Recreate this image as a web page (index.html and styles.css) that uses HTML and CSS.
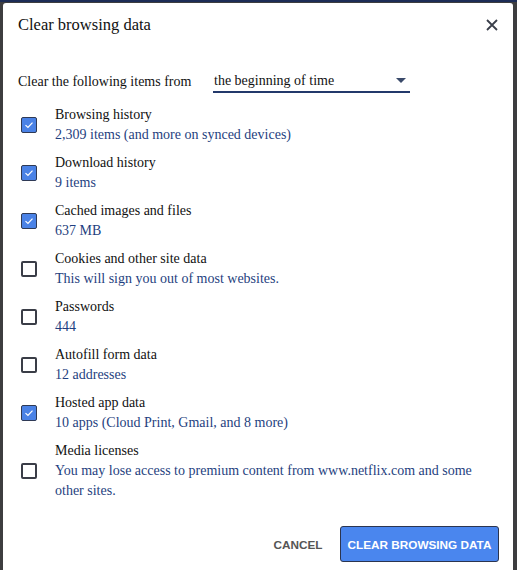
FILE: index.html
```html
<!DOCTYPE html>
<html>
<head>
<meta charset="utf-8">
<link rel="stylesheet" href="styles.css">
</head>
<body>
<div class="dialog">
  <div class="header">
    <div class="title">Clear browsing data</div>
    <svg class="close" width="12" height="12" viewBox="0 0 12 12"><path d="M1 1L11 11M11 1L1 11" stroke="#3a3f4a" stroke-width="1.8" fill="none"/></svg>
  </div>
  <div class="period">
    <span class="period-label">Clear the following items from</span>
    <div class="select">
      <span>the beginning of time</span>
      <svg width="10" height="6" viewBox="0 0 10 6"><path d="M0 0H10L5 5Z" fill="#3a4a6a"/></svg>
    </div>
  </div>
  <div class="items">
    <div class="item">
      <span class="box checked"><svg viewBox="0 0 16 16"><path d="M4 8.2L6.8 10.8L12 5.2" stroke="#fff" stroke-width="1.4" fill="none"/></svg></span>
      <div class="text"><div class="name">Browsing history</div><div class="sub">2,309 items (and more on synced devices)</div></div>
    </div>
    <div class="item">
      <span class="box checked"><svg viewBox="0 0 16 16"><path d="M4 8.2L6.8 10.8L12 5.2" stroke="#fff" stroke-width="1.4" fill="none"/></svg></span>
      <div class="text"><div class="name">Download history</div><div class="sub">9 items</div></div>
    </div>
    <div class="item">
      <span class="box checked"><svg viewBox="0 0 16 16"><path d="M4 8.2L6.8 10.8L12 5.2" stroke="#fff" stroke-width="1.4" fill="none"/></svg></span>
      <div class="text"><div class="name">Cached images and files</div><div class="sub">637 MB</div></div>
    </div>
    <div class="item">
      <span class="box"></span>
      <div class="text"><div class="name">Cookies and other site data</div><div class="sub">This will sign you out of most websites.</div></div>
    </div>
    <div class="item">
      <span class="box"></span>
      <div class="text"><div class="name">Passwords</div><div class="sub">444</div></div>
    </div>
    <div class="item">
      <span class="box"></span>
      <div class="text"><div class="name">Autofill form data</div><div class="sub">12 addresses</div></div>
    </div>
    <div class="item">
      <span class="box checked"><svg viewBox="0 0 16 16"><path d="M4 8.2L6.8 10.8L12 5.2" stroke="#fff" stroke-width="1.4" fill="none"/></svg></span>
      <div class="text"><div class="name">Hosted app data</div><div class="sub">10 apps (Cloud Print, Gmail, and 8 more)</div></div>
    </div>
    <div class="item">
      <span class="box"></span>
      <div class="text"><div class="name">Media licenses</div><div class="sub">You may lose access to premium content from www.netflix.com and some other sites.</div></div>
    </div>
  </div>
  <div class="actions">
    <button class="btn cancel">CANCEL</button>
    <button class="btn primary">CLEAR BROWSING DATA</button>
  </div>
</div>
</body>
</html>
```
FILE: styles.css
```css
html, body {
  margin: 0;
  padding: 0;
  background: #3d3d3f;
  height: 570px;
  overflow: hidden;
}
body {
  border-top: 2px solid #1c2c56;
  font-family: serif;
  color: #111;
}
.dialog {
  margin: 1px 4px 0 3px;
  background: #fff;
  border-radius: 3px 3px 0 0;
  height: 600px;
  padding: 12px 14px 0 15px;
  box-sizing: border-box;
}
.header {
  display: flex;
  justify-content: space-between;
  align-items: center;
  height: 20px;
}
.title {
  font-size: 16.5px;
  line-height: 20px;
}
.close {
  margin-right: 1px;
}
.period {
  display: flex;
  align-items: center;
  margin-top: 35px;
  font-size: 14px;
  height: 24px;
}
.period-label {
  width: 195px;
}
.select {
  width: 197px;
  display: flex;
  justify-content: space-between;
  align-items: center;
  border-bottom: 2px solid #23396b;
  height: 22px;
  padding-left: 1px;
  box-sizing: border-box;
}
.select svg {
  margin-right: 4px;
}
.items {
  margin-top: 11px;
  display: flex;
  flex-direction: column;
  gap: 8px;
}
.item {
  display: flex;
  align-items: center;
}
.box {
  width: 16px;
  height: 16px;
  box-sizing: border-box;
  border: 2px solid #3a3d47;
  border-radius: 2px;
  margin-left: 3px;
  margin-right: 18px;
  flex: none;
  display: flex;
}
.box.checked {
  background: #4a82e6;
  border: 1px solid #2f3a55;
}
.box svg {
  width: 100%;
  height: 100%;
}
.text {
  font-size: 14px;
  line-height: 20px;
  width: 440px;
}
.sub {
  color: #1f3f80;
}
.actions {
  display: flex;
  justify-content: flex-end;
  align-items: center;
  gap: 16px;
  margin-top: 25px;
}
.btn {
  font-family: "Liberation Sans", Arial, sans-serif;
  font-weight: bold;
  font-size: 11.75px;
  border: none;
  background: none;
  padding: 0;
}
.cancel {
  color: #555;
  width: 52px;
}
.primary {
  width: 159px;
  height: 36px;
  background: #4a86ee;
  color: #fff;
  border: 1px solid #2b3550;
  border-radius: 3px;
}
```
